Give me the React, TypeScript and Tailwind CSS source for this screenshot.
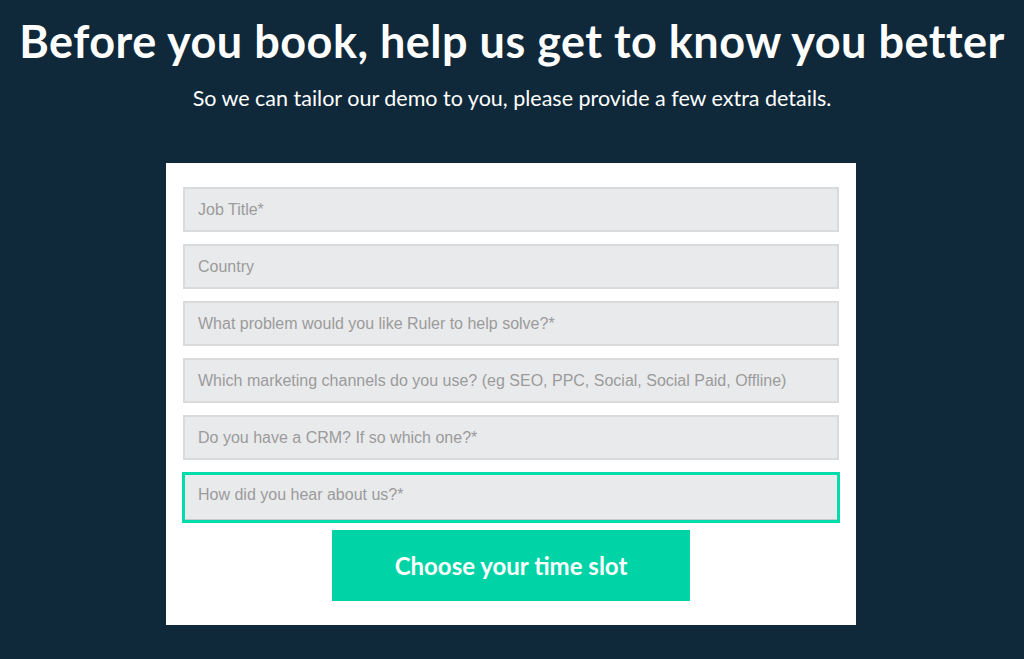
const fields = [
  'Job Title*',
  'Country',
  'What problem would you like Ruler to help solve?*',
  'Which marketing channels do you use? (eg SEO, PPC, Social, Social Paid, Offline)',
  'Do you have a CRM? If so which one?*',
];

export default function App() {
  return (
    <div className="min-h-[659px] w-full bg-[#0f293b] flex flex-col items-center font-['Lato',sans-serif]">
      <h1 className="mt-[14px] text-white font-bold text-[45px] leading-[54px] tracking-[0.5px] whitespace-nowrap">
        Before you book, help us get to know you better
      </h1>
      <p className="mt-[16px] text-white text-[21.5px] leading-[28px]">
        So we can tailor our demo to you, please provide a few extra details.
      </p>

      <form className="mt-[51px] mr-[2px] w-[690px] bg-white px-[17px] pt-[24px] pb-[24px] flex flex-col">
        <div className="flex flex-col gap-[12px]">
          {fields.map(f => (
            <div
              key={f}
              className="h-[45px] bg-[#e9eaec] border-2 border-[#d9dadc] flex items-center px-[13px] text-[16px] text-[#9b9b9b] font-['Liberation_Sans',Arial,sans-serif]"
            >
              {f}
            </div>
          ))}
          <div className="h-[51px] -mx-[1px] border-[3px] border-[#00dcab]">
            <div className="h-full bg-[#e9eaec] border-b border-[#c9cacc] flex items-center px-[13px] pb-[5px] text-[16px] text-[#9b9b9b] font-['Liberation_Sans',Arial,sans-serif]">
              How did you hear about us?*
            </div>
          </div>
        </div>
        <button
          type="button"
          className="mt-[7px] self-center w-[358px] h-[71px] bg-[#00d4a7] text-white text-[24px] font-bold"
        >
          Choose your time slot
        </button>
      </form>
    </div>
  );
}
